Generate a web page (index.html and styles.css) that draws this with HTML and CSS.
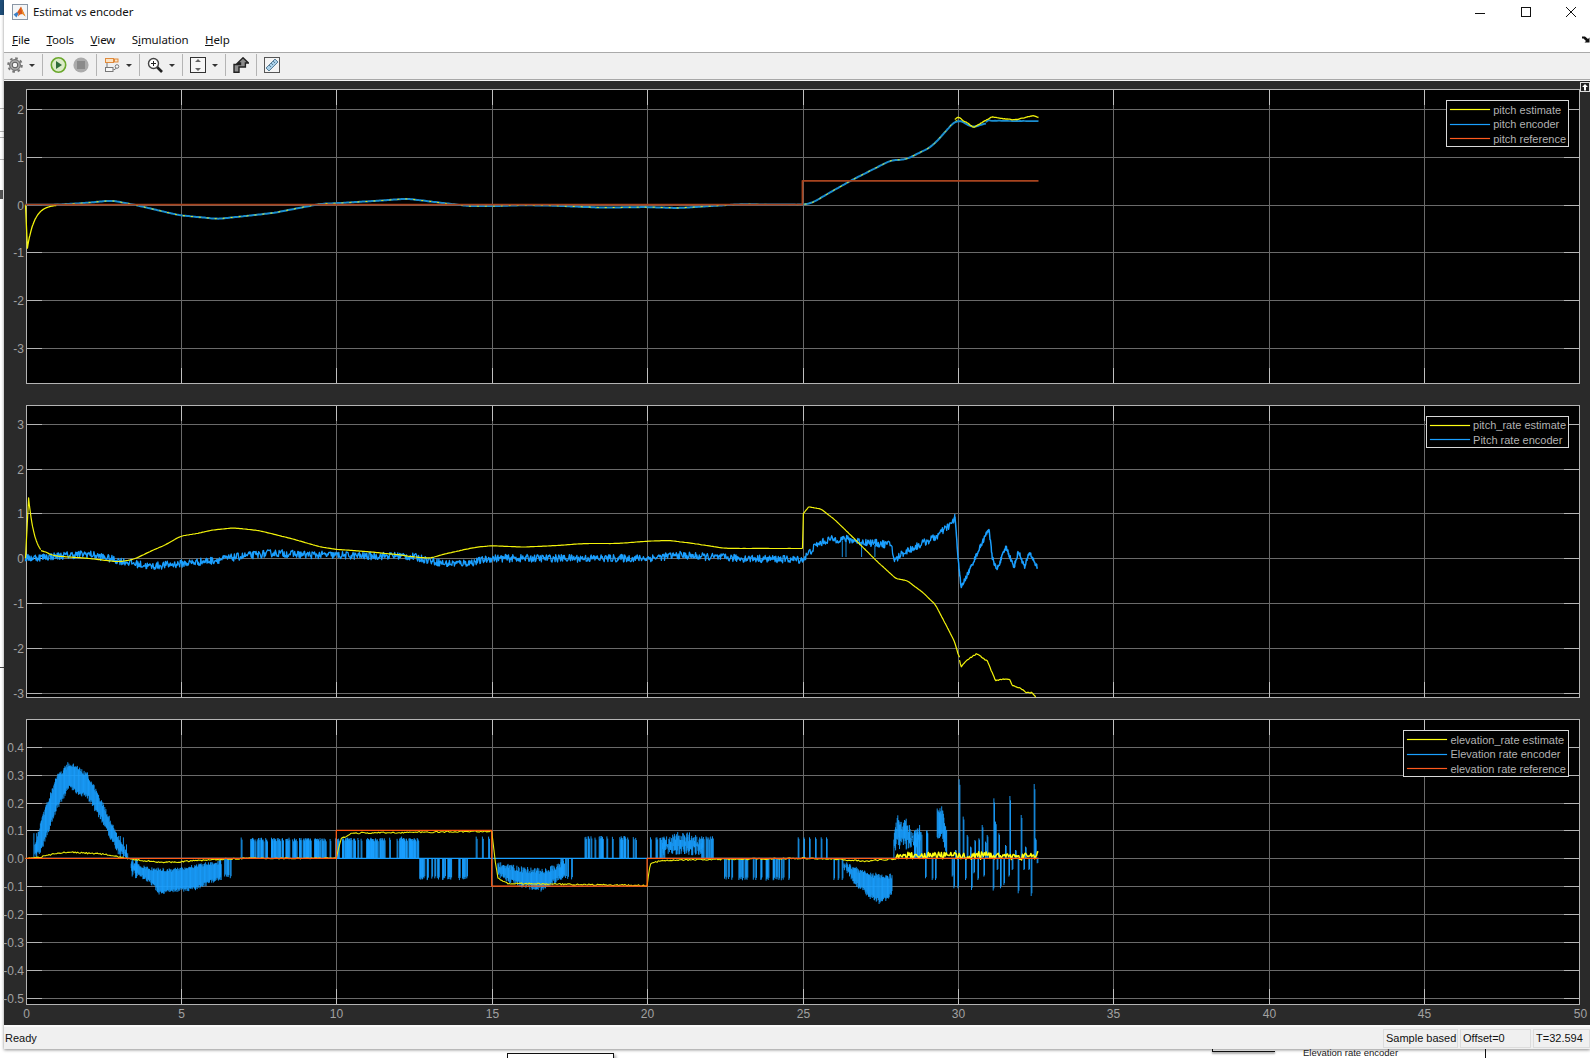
FILE: index.html
```html
<!DOCTYPE html>
<html>
<head>
    <meta charset="utf-8">
    <title>Estimat vs encoder</title>
    <link rel="stylesheet" href="styles.css">
</head>
<body>
    <!-- bits of other windows showing behind the scope -->
    <div class="behind">
        <div class="behind-corner"></div>
        <div class="behind-rule rule-a"></div>
        <div class="behind-rule rule-b"></div>
        <div class="behind-rule rule-c"></div>
        <div class="behind-rule rule-d"></div>
        <div class="behind-blob"></div>
        <div class="behind-rule rule-e"></div>
        <div class="model-block"></div>
        <div class="model-gain"></div>
        <div class="model-label">Elevation rate encoder</div>
        <div class="model-wire"></div>
    </div>

    <div class="window">
        <div class="titlebar">
            <svg class="app-icon" viewBox="0 0 16 16" width="16" height="16">
                <rect x="0.5" y="0.5" width="15" height="15" fill="#f4f6f8" stroke="#8a97a6"/>
                <path d="M1.5 10.5 L5 8 L6.5 9.5 L4.5 13.5 Z" fill="#3b7fc4"/>
                <path d="M5 8.5 L9 2.5 L13.5 12.5 L10.5 10 L8 10.5 L6 12.5 L6.5 9.5 Z" fill="#d9571c"/>
                <path d="M9 2.5 L11 8 L13.5 12.5 L10.5 10 Z" fill="#f0a030"/>
            </svg>
            <span class="title-text">Estimat vs encoder</span>
            <div class="window-controls">
                <svg viewBox="0 0 10 10" width="10" height="10"><path d="M0 6.5 H10" stroke="#111" fill="none"/></svg>
                <svg viewBox="0 0 10 10" width="10" height="10"><rect x="0.5" y="0.5" width="9" height="9" stroke="#111" fill="none"/></svg>
                <svg viewBox="0 0 10 10" width="10" height="10"><path d="M0 0 L10 10 M10 0 L0 10" stroke="#111" fill="none"/></svg>
            </div>
        </div>

        <div class="menubar">
            <span class="menu-item"><u>F</u>ile</span>
            <span class="menu-item"><u>T</u>ools</span>
            <span class="menu-item"><u>V</u>iew</span>
            <span class="menu-item">S<u>i</u>mulation</span>
            <span class="menu-item"><u>H</u>elp</span>
            <svg class="undock" viewBox="0 0 8 7" width="8" height="7"><path d="M0 0.5 H3 L6 3 L7.5 1.5 V6.5 H2.5 L4 5 L1.5 2.5 H0 Z" fill="#111"/></svg>
        </div>

        <div class="toolbar">
            <svg class="tool" viewBox="0 0 16 16" width="16" height="16">
                <circle cx="8" cy="8" r="6.8" fill="none" stroke="#777" stroke-width="2" stroke-dasharray="2.6 2.74"/>
                <circle cx="8" cy="8" r="5.4" fill="#a8a8a8" stroke="#666"/>
                <circle cx="8" cy="8" r="2.8" fill="#f4f4f4" stroke="#555"/>
            </svg>
            <span class="drop"></span>
            <span class="sep"></span>
            <svg class="tool play" viewBox="0 0 17 16" width="17" height="16">
                <circle cx="8.5" cy="8" r="7.2" fill="#dcebc8" stroke="#6aa82c" stroke-width="1.6"/>
                <path d="M6 4 L12 8 L6 12 Z" fill="#2f6b3a"/>
            </svg>
            <svg class="tool" viewBox="0 0 16 16" width="16" height="16">
                <circle cx="8" cy="8" r="7.6" fill="#ababab"/>
                <rect x="4" y="4" width="8" height="8" fill="#8a8a8a"/>
            </svg>
            <span class="sep"></span>
            <svg class="tool" viewBox="0 0 16 16" width="16" height="16">
                <path d="M3 5 V12 M9 3.5 H11 M9.5 12.5 H11 L12.5 10.5" stroke="#777" fill="none"/>
                <rect x="1.5" y="1.5" width="8" height="4" fill="#fbe3c4" stroke="#e08a3c"/>
                <rect x="10.5" y="2" width="3.5" height="3" fill="#fbe3c4" stroke="#e08a3c"/>
                <rect x="1.5" y="10.5" width="7.5" height="4" fill="#f8f8f8" stroke="#777"/>
                <circle cx="13" cy="9.5" r="1.8" fill="#f8f8f8" stroke="#777"/>
            </svg>
            <span class="drop"></span>
            <span class="sep"></span>
            <svg class="tool" viewBox="0 0 16 16" width="16" height="16">
                <path d="M10 10 L15 15" stroke="#222" stroke-width="2.6"/>
                <circle cx="6.5" cy="6.5" r="5" fill="#fff" stroke="#444" stroke-width="1.4"/>
                <path d="M4 6.5 H9 M6.5 4 V9" stroke="#222"/>
            </svg>
            <span class="drop"></span>
            <span class="sep"></span>
            <svg class="tool" viewBox="0 0 16 16" width="16" height="16">
                <rect x="0.5" y="0.5" width="15" height="15" fill="#f7f7f7" stroke="#333"/>
                <path d="M8 2 L11 5 H5 Z M8 14 L11 11 H5 Z" fill="#666"/>
            </svg>
            <span class="drop"></span>
            <span class="sep"></span>
            <svg class="tool" viewBox="0 0 16 16" width="16" height="16">
                <path d="M10 0.8 L15.4 6 H12.4 V10 H6 V15.2 H1 V7.5 H7.5 V6 H4.6 Z" fill="#8c8c8c" stroke="#222" stroke-width="1.4" stroke-linejoin="miter"/>
            </svg>
            <span class="sep"></span>
            <svg class="tool" viewBox="0 0 16 16" width="16" height="16">
                <rect x="0.5" y="0.5" width="15" height="15" fill="#f4f4f4" stroke="#555"/>
                <path d="M2 11 L11 2 L14 5 L5 14 Z" fill="#a9cfe8" stroke="#5a7f99"/>
                <path d="M5 8 L7 10 M7 6 L9 8 M9 4 L11 6" stroke="#5a7f99"/>
            </svg>
        </div>

        <div class="scope">
            <div class="axes axes-pitch">
                <svg class="plot" id="plotPitch"></svg>
                <div class="legend">
                    <span class="key key-yellow"></span><span>pitch estimate</span>
                    <span class="key key-blue"></span><span>pitch encoder</span>
                    <span class="key key-orange"></span><span>pitch reference</span>
                </div>
            </div>
            <div class="axes axes-rate">
                <svg class="plot" id="plotRate"></svg>
                <div class="legend legend-two">
                    <span class="key key-yellow"></span><span>pitch_rate estimate</span>
                    <span class="key key-blue"></span><span>Pitch rate encoder</span>
                </div>
            </div>
            <div class="axes axes-elev">
                <svg class="plot" id="plotElev"></svg>
                <div class="legend">
                    <span class="key key-yellow"></span><span>elevation_rate estimate</span>
                    <span class="key key-blue"></span><span>Elevation rate encoder</span>
                    <span class="key key-orange"></span><span>elevation rate reference</span>
                </div>
            </div>
            <div class="expand-btn">
                <svg viewBox="0 0 10 10" width="10" height="10">
                    <rect x="0.5" y="0.5" width="9" height="9" fill="#222" stroke="#ddd"/>
                    <path d="M5 2 L8 5 H6 V8.5 H4 V5 H2 Z" fill="#fff"/>
                </svg>
            </div>
        </div>

        <div class="statusbar">
            <span class="status-text">Ready</span>
            <span class="status-cell cell-sample">Sample based</span>
            <span class="status-cell cell-offset">Offset=0</span>
            <span class="status-cell cell-time">T=32.594</span>
        </div>
    </div>

    <script src="plot.js"></script>
</body>
</html>
```

FILE: styles.css
```css
body {
    margin: 0;
    height: 1058px;
    overflow: hidden;
    background-color: #fff;
    position: relative;
    font-family: "Liberation Sans", Arial, sans-serif;
    color: #111;
}

/* things behind the scope window */
.behind-corner {
    position: absolute;
    left: 0;
    top: 0;
    width: 4px;
    height: 15px;
    background-color: #1f4e79;
}
.behind-rule {
    position: absolute;
    left: 0;
    width: 4px;
    height: 1px;
    background-color: #b5b5b5;
}
.rule-a { top: 108px; }
.rule-b { top: 131px; }
.rule-c { top: 137px; }
.rule-d { top: 159px; }
.rule-e { top: 667px; background-color: #444; }
.behind-blob {
    position: absolute;
    left: 0;
    top: 190px;
    width: 3px;
    height: 9px;
    background-color: #555;
}
.model-block {
    position: absolute;
    left: 507px;
    top: 1053px;
    width: 105px;
    height: 10px;
    border: 1px solid #111;
    box-shadow: 2px 2px 3px rgba(0,0,0,0.35);
}
.model-gain {
    position: absolute;
    left: 1212px;
    top: 1049px;
    width: 62px;
    height: 2px;
    border-left: 1px solid #111;
    border-bottom: 1px solid #111;
    box-shadow: 0 2px 2px rgba(0,0,0,0.3);
}
.model-label {
    position: absolute;
    left: 1303px;
    top: 1047px;
    font-size: 9.5px;
    line-height: 12px;
    color: #222;
}
.model-wire {
    position: absolute;
    left: 1485px;
    top: 1049px;
    width: 1px;
    height: 9px;
    background-color: #111;
}

.window {
    position: relative;
    margin-left: 4px;
    height: 1049px;
    display: flex;
    flex-direction: column;
    background-color: #fff;
    box-shadow: 0 1px 3px rgba(0,0,0,0.45);
}

.titlebar {
    height: 28px;
    display: flex;
    align-items: center;
    padding: 0 14px 5px 8px;
    box-sizing: border-box;
    font-family: "Noto Sans", sans-serif;
    font-size: 11.5px;
    letter-spacing: -0.1px;
}
.app-icon {
    margin-right: 5px;
}
.window-controls {
    margin-left: auto;
    display: flex;
    gap: 35.5px;
}

.menubar {
    height: 25px;
    display: flex;
    align-items: center;
    gap: 16.5px;
    padding: 0 0 2px 8px;
    box-sizing: border-box;
    border-bottom: 1px solid #aaa;
    font-family: "Noto Sans", sans-serif;
    font-size: 11.5px;
    letter-spacing: -0.1px;
}
.undock {
    margin-left: auto;
}

.toolbar {
    height: 27px;
    display: flex;
    align-items: center;
    gap: 6px;
    padding: 0 0 2px 3px;
    box-sizing: border-box;
    background-color: #f0f0f0;
    border-bottom: 1px solid #a8a8a8;
}
.tool {
    flex: none;
}
.drop {
    width: 0;
    height: 0;
    border-left: 3px solid transparent;
    border-right: 3px solid transparent;
    border-top: 3px solid #333;
}
.sep {
    width: 1px;
    height: 22px;
    margin: 0 1px;
    background-color: #b4b4b4;
}

.scope {
    position: relative;
    flex: 1;
    padding-top: 8px;
    background-color: #2a2a2a;
    border-top: 1px solid #f4f4f4;
}
.axes {
    position: relative;
    box-sizing: border-box;
    margin: 0 10px 0 22px;
    border: 1px solid #b4b4b4;
    background-color: #000;
}
.axes-pitch { height: 295px; }
.axes-rate { height: 293px; margin-top: 21px; }
.axes-elev { height: 286px; margin-top: 21px; }
.plot {
    display: block;
    width: 100%;
    height: 100%;
    overflow: visible;
}
.plot text {
    font-family: "Liberation Sans", Arial, sans-serif;
    font-size: 12px;
    fill: #a2a2a2;
}

.legend {
    position: absolute;
    top: 10px;
    right: 10px;
    display: grid;
    grid-template-columns: 40px auto;
    grid-template-rows: 15px 14px 15px;
    column-gap: 3px;
    align-items: center;
    padding: 1px 2px 0 3px;
    background-color: #000;
    border: 1px solid #d8d8d8;
    font-size: 11px;
    color: #b2b2b2;
}
.legend-two {
    grid-template-rows: 14px 15px;
}
.key {
    height: 1px;
    background-color: currentColor;
    box-shadow: 0 0 1px currentColor;
}
.key-yellow { color: #ffff14; }
.key-blue { color: #1a9fff; }
.key-orange { color: #ff5a1e; }

.expand-btn {
    position: absolute;
    right: 0;
    top: 1px;
    width: 10px;
    height: 10px;
}
.expand-btn svg {
    display: block;
}

.statusbar {
    height: 24px;
    display: flex;
    align-items: center;
    gap: 2px;
    padding-left: 1px;
    box-sizing: border-box;
    background-color: #f0f0f0;
    border-top: 2px solid #fafafa;
    font-size: 11px;
}
.status-text {
    margin-right: auto;
}
.status-cell {
    box-sizing: border-box;
    height: 19px;
    line-height: 17px;
    padding-left: 2px;
    border: 1px solid #dcdcdc;
}
.cell-sample { width: 75px; }
.cell-offset { width: 71px; }
.cell-time { width: 57px; }
```

FILE: plot.js
```js
// scope traces, drawn from hand read key points plus some seeded noise
var seed = 12345;
function rnd() {
    seed = (seed * 16807) % 2147483647;
    return seed / 2147483647;
}
function wob(a) {
    return (rnd() * 2 - 1) * a;
}

function interp(keys, t) {
    if (t <= keys[0][0]) return keys[0][1];
    for (var i = 1; i < keys.length; i++) {
        if (t <= keys[i][0]) {
            var a = keys[i - 1], b = keys[i];
            return a[1] + (b[1] - a[1]) * (t - a[0]) / (b[0] - a[0]);
        }
    }
    return keys[keys.length - 1][1];
}

var PX = 31.08;
function xOf(t) { return t * PX - 1.5; }

function makeAxes(id, top, y0, scale, ticks, decimals, showX) {
    var svg = document.getElementById(id);
    var w = 1552, h = svg.parentNode.clientHeight;
    var out = '';
    function yOf(v) { return y0 - top - v * scale; }
    function line(x1, y1, x2, y2, col) {
        return '<path d="M' + x1 + ' ' + y1 + 'L' + x2 + ' ' + y2 + '" stroke="' + col + '" fill="none"/>';
    }
    ticks.forEach(function(v) {
        var y = Math.round(yOf(v)) + 0.5;
        out += line(0, y, w, y, '#6a6a6a');
        out += line(0, y, 15, y, '#b4b4b4');
        out += line(w - 15, y, w, y, '#b4b4b4');
        out += '<text x="-3" y="' + (y + 4) + '" text-anchor="end">' + v.toFixed(decimals) + '</text>';
    });
    for (var t = 0; t <= 50; t += 5) {
        var x = Math.round(xOf(t)) + 0.5;
        if (t > 0 && t < 50) {
            out += line(x, 0, x, h, '#6a6a6a');
            out += line(x, 0, x, 15, '#c0c0c0');
            out += line(x, h - 15, x, h, '#c0c0c0');
        }
        if (showX) {
            out += '<text x="' + x + '" y="' + (h + 14) + '" text-anchor="middle">' + t + '</text>';
        }
    }
    return {
        svg: svg,
        grid: out,
        traces: '',
        y: yOf,
        poly: function(points, col, width, extra) {
            var d = '';
            points.forEach(function(p, i) {
                d += (i ? 'L' : 'M') + xOf(p[0]).toFixed(1) + ' ' + yOf(p[1]).toFixed(1);
            });
            this.traces += '<path d="' + d + '" stroke="' + col + '" stroke-width="' + width + '" fill="none" stroke-linejoin="round" ' + (extra || '') + '/>';
        },
        verticals: function(list, col, width) {
            var d = '';
            list.forEach(function(s) {
                d += 'M' + xOf(s[0]).toFixed(1) + ' ' + yOf(s[1]).toFixed(1) + 'V' + yOf(s[2]).toFixed(1);
            });
            this.traces += '<path d="' + d + '" stroke="' + col + '" stroke-width="' + width + '" fill="none"/>';
        },
        done: function() {
            svg.innerHTML = this.grid + this.traces;
        }
    };
}

function sample(keys, t0, t1, step, noise) {
    var pts = [];
    for (var t = t0; t < t1; t += step) {
        pts.push([t, interp(keys, t) + (noise ? wob(noise) : 0)]);
    }
    pts.push([t1, interp(keys, t1)]);
    return pts;
}

// moving average so the key points don't read as corners
function smooth(pts, n) {
    return pts.map(function(p, i) {
        var sum = 0, count = 0;
        for (var j = Math.max(0, i - n); j <= Math.min(pts.length - 1, i + n); j++) {
            sum += pts[j][1];
            count++;
        }
        return [p[0], sum / count];
    });
}

// filter start up transient, a jump then an exponential decay back
function decay(peak, tPeak, tau, t1) {
    var pts = [[0, 0]];
    for (var t = tPeak; t <= t1; t += .01) {
        pts.push([t, peak * Math.exp(-(t - tPeak) / tau)]);
    }
    return pts;
}

var END = 32.594;

/* ---- pitch ---- */
var pitchEnc = [[0,0],[1,0],[2,.04],[2.75,.09],[3.5,0],[4.94,-.22],[6.2,-.3],[8,-.17],[9.5,.02],[10,.03],[11,.07],[12.3,.125],
    [13.5,.03],[14.3,-.03],[15,-.03],[16,-.01],[17,-.02],[18.5,-.06],[20,-.05],[21,-.07],[22,-.03],[23,.01],[25,0],[25.3,.03],
    [25.85,.245],[26.6,.52],[27.87,.94],[28.3,.94],[29.17,1.22],[29.98,1.81],[30.5,1.6],[31,1.77],[31.1,1.76],[32.594,1.75]];
var pitchEst = [[0,0],[1,0]].concat(pitchEnc.slice(2, 29)).concat(
    [[30,1.84],[30.5,1.62],[31,1.8],[31.1,1.85],[31.5,1.8],[31.9,1.79],[32.2,1.84],[32.45,1.87],[32.594,1.83]]);

var a1 = makeAxes('plotPitch', 90, 204.7, 47.7, [2, 1, 0, -1, -2, -3], 0, false);
a1.poly(smooth(sample(pitchEnc, 0, 30.9, .05, 0), 4), '#1b8ed0', 2);
a1.poly(sample(pitchEnc, 30.9, END, .05, .003), '#1b8ed0', 1.7);
a1.poly(smooth(sample(pitchEst, 1, 30, .05, .006), 3), '#f2f20a', 1, 'stroke-dasharray="2 6"');
a1.poly(decay(-.91, .06, .23, 1), '#f2f20a', 1.3);
a1.poly(smooth(sample(pitchEst, 29.9, END, .04, .018), 1), '#f2f20a', 1.3);
a1.poly([[0,0],[25,0],[25,.5],[END,.5]], '#a8441f', 1.8);
a1.done();

/* ---- pitch rate ---- */
var rateEst = [[.5,.2],[.8,.08],[1,.05],[2,0],[3,-.08],[3.5,-.02],[4,.15],[4.5,.3],[5,.5],[5.5,.55],[6,.63],[6.7,.68],
    [7.5,.62],[8.5,.45],[9.5,.25],[10,.2],[11,.15],[12,.08],[12.5,.03],[13,0],[13.5,.1],[14.5,.25],[15,.28],[16,.25],[17,.28],[18,.33],[19,.33],
    [20,.38],[20.7,.4],[21.5,.33],[22.5,.22],[25,.22],[25.03,1],[25.2,1.15],[25.6,1.1],[26.05,.855],[26.65,.45],[27.4,-.07],[28,-.45],[28.37,-.5],
    [28.9,-.78],[29.28,-1.04],[29.65,-1.53],[29.92,-1.9],[30.1,-2.42],[30.3,-2.27],[30.6,-2.13],[30.95,-2.3],[31.2,-2.72],[31.65,-2.69],[31.75,-2.84],
    [32,-2.9],[32.2,-3],[32.4,-3],[32.5,-3.1]];
var rateEnc = [[0,0],[1,.05],[2,.1],[3,-.05],[4,-.18],[5,-.12],[6,-.05],[7,.05],[8,.12],[9,.08],[10,.07],[11,.05],[12,.06],[12.5,.03],[13.5,-.12],
    [14.3,-.1],[15,0],[20,0],[21,.07],[22,.03],[23,0],[25,-.03],[25.05,0],[25.45,.3],[25.85,.42],[26.4,.43],[26.9,.37],[27.87,.3],[27.95,-.07],
    [28.2,.11],[28.85,.33],[29.3,.48],[29.87,.82],[29.9,.97],[30,.07],[30.1,-.66],[30.35,-.3],[30.7,.23],[31,.67],[31.1,.03],[31.25,-.26],[31.55,.26],
    [31.8,-.2],[31.95,.15],[32.15,-.2],[32.3,.14],[32.55,-.2]];

var a2 = makeAxes('plotRate', 406, 558.3, 44.8, [3, 2, 1, 0, -1, -2, -3], 0, false);
a2.poly(sample(rateEnc, 0, 29.9, .02, .085), '#1a9fff', 1.3);
a2.poly(sample(rateEnc, 29.87, END - .04, .012, .05), '#1a9fff', 1.5);
a2.verticals([[26.28,.4,.03],[26.4,.4,.03],[26.9,.35,.03],[27.33,.3,.03]], '#1a8fe0', 1);
a2.poly(decay(1.35, .1, .2, .5), '#f2f20a', 1.2);
a2.poly(smooth(sample(rateEst, .5, 25, .05, .004), 3), '#f2f20a', 1.2);
a2.poly(sample(rateEst, 25, 25.2, .01, 0), '#f2f20a', 1.2);
a2.poly(smooth(sample(rateEst, 25.2, 30.05, .03, .004), 2), '#f2f20a', 1.2);
a2.poly(sample(rateEst, 30.05, 32.5, .03, .012), '#f2f20a', 1.2);
a2.done();

/* ---- elevation rate ---- */
function band(list, top, bot, t0, t1, edge) {
    for (var t = t0; t < t1; t += .018) {
        var hi = interp(top, t), lo = interp(bot, t);
        list.push([t, hi - rnd() * edge, lo + rnd() * edge]);
    }
}
function spikes(list, t0, t1, n, amp) {
    for (var i = 0; i < n; i++) {
        var t = t0 + (t1 - t0) * rnd();
        var v = amp * (.93 + rnd() * .1);
        list.push([t, 0, v]);
        list.push([t + .025, 0, v * .9]);
    }
}

var elevRef = [[0,0],[10,0],[10,.1],[15,.1],[15,-.1],[20,-.1],[20,0],[END,0]];
var elevEst = [[0,0],[.5,.005],[1,.018],[1.5,.022],[2.5,.015],[3,.005],[3.5,-.005],[4.5,-.015],[5,-.012],[6,-.005],[7,0],[10,0],[10.15,.07],[10.5,.09],
    [15,.097],[15.1,0],[15.2,-.07],[15.5,-.09],[20,-.098],[20.1,-.02],[20.5,-.007],[25,0],[26,-.003],[27,-.01],[28,-.002]];

var blue = [];
// mound at start
band(blue, [[.3,.05],[.5,.14],[1,.3],[1.4,.35],[2,.31],[2.5,.2],[3,.08],[3.3,.02]],
    [[.3,0],[.5,.02],[1,.17],[1.4,.245],[2,.21],[2.5,.12],[3,.01],[3.3,0]], .3, 3.3, .02);
[[.27,.09],[.36,.09],[3.05,.08],[3.15,.075],[3.25,.05]].forEach(function(s) { blue.push([s[0], 0, s[1]]); });
// negative mound
band(blue, [[3.4,-.01],[4,-.03],[4.5,-.035],[5,-.03],[5.5,-.02],[6,-.01],[6.5,-.005]],
    [[3.4,-.05],[4,-.09],[4.3,-.13],[5.5,-.115],[6,-.09],[6.5,-.07]], 3.4, 6.3, .015);
spikes(blue, 3.4, 3.6, 3, -.07);
spikes(blue, 6.2, 6.75, 6, -.07);
// chatter around zero
spikes(blue, 6.93, 6.95, 1, .075);
spikes(blue, 7.25, 10, 75, .072);
spikes(blue, 10, 12.7, 68, .072);
spikes(blue, 12.6, 14.2, 26, -.076);
[12.1, 14.5, 14.7, 14.9].forEach(function(t) { blue.push([t, 0, .078], [t + .03, 0, .07]); });
band(blue, [[15.2,-.012],[16,-.03],[16.7,-.036],[17.4,-.005]], [[15.2,-.07],[16,-.11],[16.6,-.12],[17.4,-.07]], 15.2, 17.35, .022);
spikes(blue, 17.2, 17.6, 5, -.075);
spikes(blue, 17.9, 19.7, 24, .078);
spikes(blue, 20.1, 20.6, 7, .078);
band(blue, [[20.5,.075],[21,.095],[21.4,.095],[21.8,.075]], [[20.5,.01],[21.8,.01]], 20.5, 21.8, .035);
spikes(blue, 21.7, 22.35, 7, .078);
spikes(blue, 22.45, 24.4, 26, -.078);

// the part after 24, read off as spike list
function zx(x) { return 24.24 + x / 93.24; }
function zv(y) { return (265 - y) / 835.5; }
[[0,330],[30,330],[58,202],[75,202],[92,202],[110,202],[127,202],[143,202],[165,330],[178,330],[190,330],[440,325],[460,330],[470,330],
 [541,28],[553,140],[565,195],[588,210],[600,205],[610,165],[625,195],[645,85],[650,155],[660,190],[693,78],[727,135],[766,42],[770,205],
 [525,355],[537,355],[560,330],[578,360],[597,330],[615,320],[643,362],[665,355],[675,345],[690,320],[718,370],[757,378],[775,280],
 [530,240],[575,230],[620,215],[680,225],[710,240],[740,230],[750,300],[735,300],[700,300],[655,300],[585,310],[520,320]].forEach(function(s) {
    blue.push([zx(s[0]), 0, zv(s[1])]);
    blue.push([zx(s[0] + 2), 0, zv(s[1]) * .93]);
});
// sagging block before 28
band(blue, [[zx(195),-.005],[zx(215),-.02],[zx(270),-.05],[zx(340),-.055]], [[zx(195),-.04],[zx(230),-.1],[zx(270),-.144],[zx(305),-.167],[zx(340),-.137]], zx(195), zx(340), .02);
// rough block after 28
band(blue, [[zx(345),.09],[zx(355),.16],[zx(365),.14],[zx(385),.15],[zx(400),.1],[zx(415),.115],[zx(425),.125],[zx(440),.09]],
    [[zx(345),0],[zx(352),.03],[zx(420),.03],[zx(440),0]], zx(345), zx(425), .045);
spikes(blue, zx(405), zx(445), 10, .1);
band(blue, [[zx(475),.185],[zx(490),.188],[zx(505),.11]], [[zx(475),.06],[zx(490),.07],[zx(505),.0]], zx(475), zx(505), .03);

var a3 = makeAxes('plotElev', 720, 858.3, 278.5, [.4, .3, .2, .1, 0, -.1, -.2, -.3, -.4, -.5], 1, true);
a3.poly([[.3,0],[END,0]], '#1a9fff', 1.2);
a3.verticals(blue, '#1a9fff', .9);
a3.poly(sample(elevEst, 0, 28, .04, .0025), '#e8e80a', 1.1);
var tail = [];
for (var t = 28; t < END; t += .03) {
    tail.push([t, .01 + wob(.012) + (t > 30 ? wob(.008) : 0)]);
}
a3.poly(tail, '#ffff14', 1.5);
a3.poly(elevRef, '#ff5a14', 1.2);
a3.done();
```
